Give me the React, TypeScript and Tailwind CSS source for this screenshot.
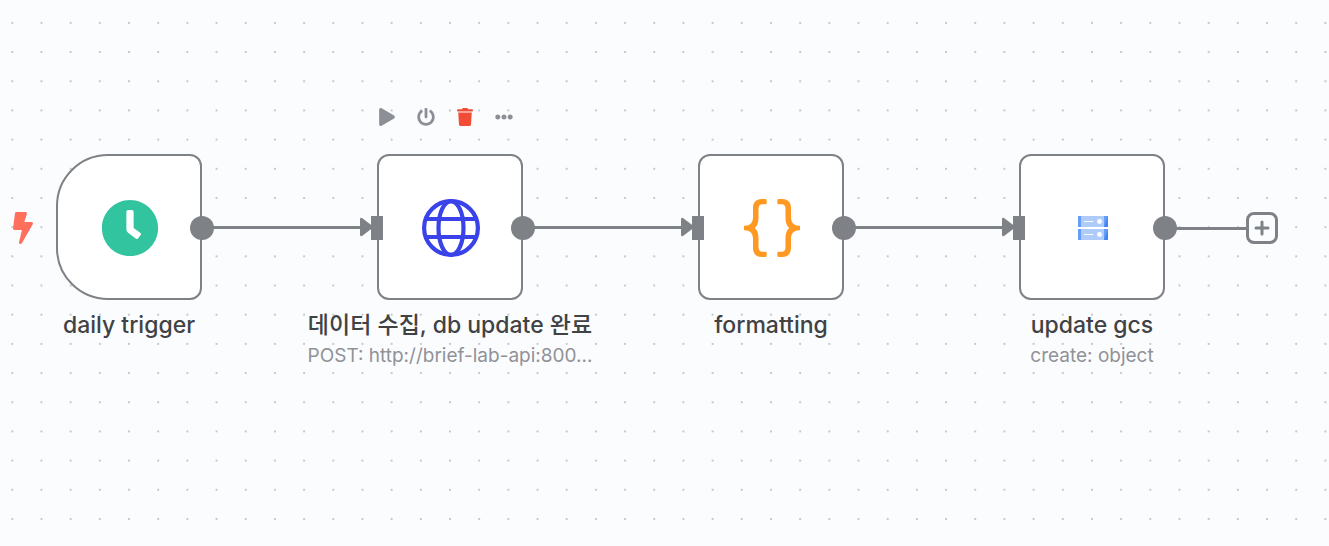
import type { ReactNode } from "react";
import { FaBolt, FaClock, FaEllipsisH, FaPlay, FaPowerOff, FaTrash } from "react-icons/fa";

function DotGrid() {
  return (
    <svg className="absolute inset-0 h-full w-full" aria-hidden="true">
      <pattern id="dots" x="-2.3" y="8.3" width="29.18" height="29.18" patternUnits="userSpaceOnUse">
        <circle cx="14.6" cy="14.6" r="1" fill="#b4b5bb" />
      </pattern>
      <rect width="100%" height="100%" fill="url(#dots)" />
    </svg>
  );
}

function GlobeIcon() {
  return (
    <svg width="58" height="58" viewBox="0 0 58 58" fill="none" stroke="#3a42e9" strokeWidth="4.2" aria-hidden="true">
      <circle cx="29" cy="29" r="26.9" />
      <ellipse cx="29" cy="29" rx="12.5" ry="26.9" />
      <path d="M4 20H54M4 38H54" />
    </svg>
  );
}

function BracesIcon() {
  return (
    <svg width="58" height="58" viewBox="0 0 58 58" fill="#ff9922" aria-hidden="true">
      <path
        id="brace"
        d="M22.5 0H18.5C13 0 10 3.6 10 9V18C10 23 7.5 26.8 2 26.8H1V31.2H2C7.500 31.2 10 35 10 40V49C10 54.400 13 58 18.500 58H22.500Q23.700 58 23.700 56.800V54Q23.700 52.800 22.500 52.800H19.500C16.500 52.800 15.500 51 15.500 48V39.500C15.500 34.500 14.500 31.500 11.800 29C14.500 26.500 15.500 23.500 15.500 18.500V10C15.500 7 16.500 5.200 19.500 5.200H22.500Q23.700 5.200 23.700 4V1.200Q23.700 0 22.500 0Z"
      />
      <use href="#brace" transform="translate(58 0) scale(-1 1)" />
    </svg>
  );
}

function StorageIcon() {
  return (
    <svg width="30" height="24" viewBox="0 0 30 24" aria-hidden="true">
      {[0, 13].map((y) => (
        <g key={y} transform={`translate(0 ${y})`}>
          <path fill="#aecbfa" d="M0 0H30V11H0Z" />
          <path fill="#669df6" d="M0 0H3V11H0Z" />
          <path fill="#669df6" d="M26 0H30V11H26Z" />
          <path fill="#4285f4" d="M30 0V11H26Z" />
          <path fill="#fff" d="M6 5H15V6H6Z" />
          <circle cx="21.500" cy="5.500" r="2.400" fill="#fff" />
        </g>
      ))}
    </svg>
  );
}

function NodeToolbar() {
  return (
    <div className="absolute -top-[47px] left-0 flex h-5 items-center text-[18px] text-[#8d8f97]">
      <button aria-label="Execute step" className="flex w-[19px] justify-center">
        <FaPlay />
      </button>
      <button aria-label="Deactivate" className="ml-5 flex w-[19px] justify-center">
        <FaPowerOff />
      </button>
      <button aria-label="Delete" className="ml-5 flex w-[19px] justify-center text-[#f24c37]">
        <FaTrash />
      </button>
      <button aria-label="More options" className="ml-5 flex w-[19px] justify-center">
        <FaEllipsisH />
      </button>
    </div>
  );
}

function Connection() {
  return (
    <div className="absolute top-[63px] left-[156px] flex w-[161px] items-center" aria-hidden="true">
      <span className="h-[3px] grow bg-[#7e8186]" />
      <svg width="13" height="20" viewBox="0 0 13 20" fill="#7e8186">
        <path d="M0 2.500Q0 0 2 1L12.500 9Q13.500 10 12.500 11L2 19Q0 20 0 17.500Z" />
      </svg>
    </div>
  );
}

type NodeProps = {
  place: string;
  title: string;
  subtitle?: string;
  trigger?: boolean;
  connected?: boolean;
  icon: ReactNode;
  children?: ReactNode;
};

function WorkflowNode({ place, title, subtitle, trigger, connected, icon, children }: NodeProps) {
  return (
    <section className={`absolute top-[154px] w-[146px] ${place}`}>
      <div
        className={`flex h-[146px] items-center justify-center border-2 border-[#7e8186] bg-white pt-0.5 pl-0.5 ${
          trigger ? "rounded-l-[52px] rounded-r-xl" : "rounded-xl"
        }`}
      >
        {icon}
      </div>
      {connected && <Connection />}
      {!trigger && <span className="absolute top-[62px] -left-1.5 h-6 w-3 bg-[#7e8186]" />}
      <span className="absolute top-[62px] -right-3 size-6 rounded-full bg-[#7e8186]" />
      {children}
      <div className="-mx-[76px] mt-2.5 flex flex-col items-center whitespace-nowrap">
        <h2 className="text-[23px] leading-[30px] font-medium text-[#414244]">{title}</h2>
        {subtitle && <p className="text-[19px] leading-8 text-[#909298]">{subtitle}</p>}
      </div>
    </section>
  );
}

export default function App() {
  return (
    <main className="relative min-h-screen w-full overflow-hidden bg-[#fbfcfe] font-['Inter','Noto_Sans_CJK_KR',sans-serif]">
      <DotGrid />
      <WorkflowNode
        place="left-[56px]"
        title="daily trigger"
        trigger
        connected
        icon={<FaClock className="size-[58px] text-[#31c49f]" />}
      >
        <FaBolt className="absolute top-[58px] -left-[49px] size-8 text-[#ff6f5c]" />
      </WorkflowNode>
      <WorkflowNode
        place="left-[377px]"
        title="데이터 수집, db update 완료"
        subtitle="POST: http://brief-lab-api:800..."
        connected
        icon={<GlobeIcon />}
      >
        <NodeToolbar />
      </WorkflowNode>
      <WorkflowNode place="left-[698px]" title="formatting" connected icon={<BracesIcon />} />
      <WorkflowNode place="left-[1019px]" title="update gcs" subtitle="create: object" icon={<StorageIcon />}>
        <div className="absolute top-[58px] left-[156px] flex items-center">
          <span className="h-[3px] w-[71px] bg-[#7e8186]" />
          <button
            aria-label="Add node"
            className="flex size-8 items-center justify-center rounded-lg border-3 border-[#7e8186] bg-[#fbfcfe]"
          >
            <svg width="16" height="16" viewBox="0 0 16 16" stroke="#7e8186" strokeWidth="3" strokeLinecap="round" aria-hidden="true">
              <path d="M8 2V14M2 8H14" />
            </svg>
          </button>
        </div>
      </WorkflowNode>
    </main>
  );
}
